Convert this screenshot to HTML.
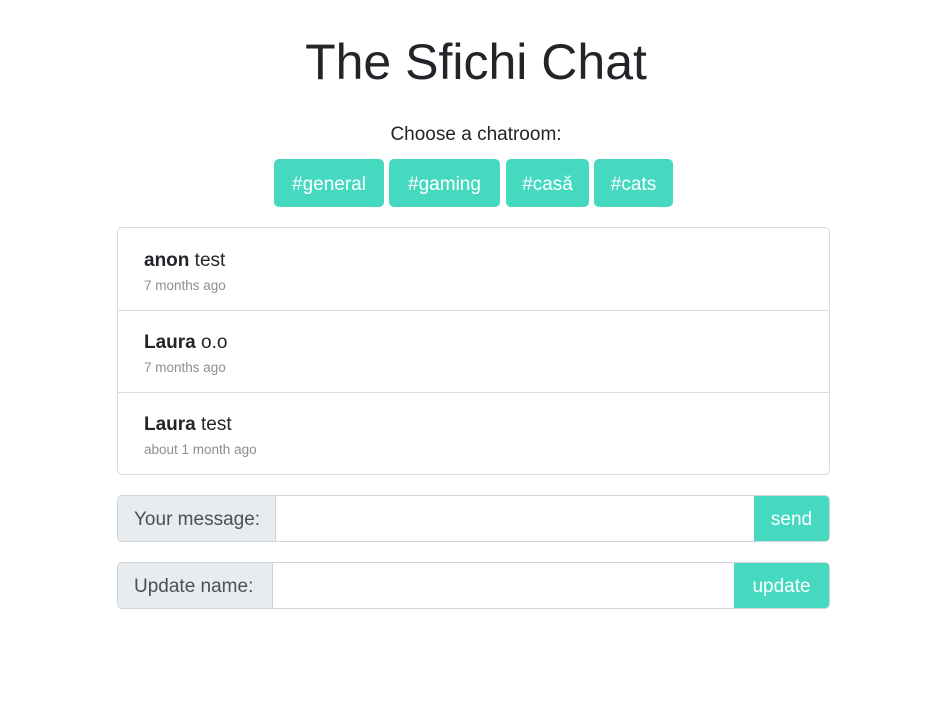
<!DOCTYPE html>
<html><head><style>
body{margin:0;background:#fff;font-family:"Liberation Sans",sans-serif;color:#212529;width:952px;height:701px;position:relative;overflow:hidden}
.a{position:absolute}
h1{position:absolute;left:0;width:952px;top:30px;margin:0;text-align:center;font-size:50px;font-weight:500;line-height:64px}
.sub{left:0;width:952px;top:123px;text-align:center;font-size:19px;line-height:24px}
.btn{background:#45d9c0;color:#fff;border-radius:5px;font-size:19px;display:flex;align-items:center;justify-content:center;padding-top:3px;box-sizing:border-box}
.card{left:117px;top:227px;width:711px;height:246px;border:1px solid #dcdcdc;border-radius:5px}
.row{position:absolute;left:0;width:711px;height:82px;border-bottom:1px solid #dcdcdc}
.row .m{position:absolute;left:26px;top:22px;font-size:19px}
.row .t{position:absolute;left:26px;top:50px;font-size:13.5px;color:#8a8f94}
.ig{left:117px;width:711px;border:1px solid #ced4da;border-radius:5px;display:flex;overflow:hidden}
.lab{background:#e9ecef;border-right:1px solid #ced4da;color:#495057;font-size:19px;display:flex;align-items:center;padding-left:16px;padding-top:2px;box-sizing:border-box}
.in{flex:1}
.ib{background:#45d9c0;color:#fff;font-size:19px;display:flex;align-items:center;justify-content:center;padding-top:2px;box-sizing:border-box}
</style></head><body>
<h1>The Sfichi Chat</h1>
<div class="a sub">Choose a chatroom:</div>
<div class="a btn" style="left:274px;top:159px;width:110px;height:48px">#general</div>
<div class="a btn" style="left:389px;top:159px;width:111px;height:48px">#gaming</div>
<div class="a btn" style="left:506px;top:159px;width:83px;height:48px">#casă</div>
<div class="a btn" style="left:594px;top:159px;width:79px;height:48px">#cats</div>
<div class="a card">
<div class="row" style="top:0"><div class="m"><b>anon</b> test</div><div class="t">7 months ago</div></div>
<div class="row" style="top:82px"><div class="m"><b>Laura</b> o.o</div><div class="t">7 months ago</div></div>
<div class="row" style="top:164px;border:none"><div class="m"><b>Laura</b> test</div><div class="t">about 1 month ago</div></div>
</div>
<div class="a ig" style="top:495px;height:45px"><div class="lab" style="width:158px">Your message:</div><div class="in"></div><div class="ib" style="width:75px">send</div></div>
<div class="a ig" style="top:562px;height:45px"><div class="lab" style="width:155px">Update name:</div><div class="in"></div><div class="ib" style="width:95px">update</div></div>
</body></html>
